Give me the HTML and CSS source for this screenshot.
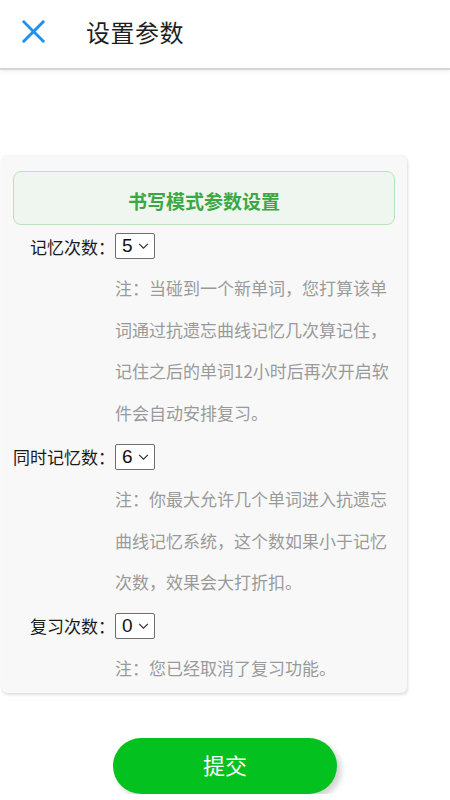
FILE: index.html
```html
<!DOCTYPE html>
<html lang="zh-CN">
<head>
<meta charset="utf-8">
<title>设置参数</title>
<link rel="stylesheet" href="styles.css">
</head>
<body>
<header class="topbar">
  <svg class="close" viewBox="0 0 24 24" width="24" height="24" aria-hidden="true">
    <path d="M2 2 L22 22 M22 2 L2 22" stroke="#1f8ff0" stroke-width="3" fill="none" stroke-linecap="square"/>
  </svg>
  <h1 class="title">设置参数</h1>
</header>

<main class="card">
  <div class="card-head">书写模式参数设置</div>

  <div class="row">
    <span class="label">记忆次数：</span>
    <span class="select"><span class="val">5</span><svg viewBox="0 0 12 8" width="11" height="7"><path d="M1 1 L6 6 L11 1" stroke="#333" stroke-width="1.4" fill="none"/></svg></span>
  </div>
  <p class="note">注：当碰到一个新单词，您打算该单词通过抗遗忘曲线记忆几次算记住，记住之后的单词12小时后再次开启软件会自动安排复习。</p>

  <div class="row">
    <span class="label">同时记忆数：</span>
    <span class="select"><span class="val">6</span><svg viewBox="0 0 12 8" width="11" height="7"><path d="M1 1 L6 6 L11 1" stroke="#333" stroke-width="1.4" fill="none"/></svg></span>
  </div>
  <p class="note">注：你最大允许几个单词进入抗遗忘曲线记忆系统，这个数如果小于记忆次数，效果会大打折扣。</p>

  <div class="row">
    <span class="label">复习次数：</span>
    <span class="select"><span class="val">0</span><svg viewBox="0 0 12 8" width="11" height="7"><path d="M1 1 L6 6 L11 1" stroke="#333" stroke-width="1.4" fill="none"/></svg></span>
  </div>
  <p class="note">注：您已经取消了复习功能。</p>
</main>

<div class="actions">
  <button class="submit">提交</button>
</div>
</body>
</html>
```

FILE: styles.css
```css
* { box-sizing: border-box; }
html, body { margin: 0; padding: 0; background: #ffffff; }
body {
  font-family: "Noto Sans CJK SC", "Noto Sans", sans-serif;
  color: #222;
  width: 450px;
}
.topbar {
  height: 70px;
  display: flex;
  align-items: center;
  padding-left: 22px;
  padding-bottom: 6px;
  background: #fff;
  border-bottom: 2px solid #d6d6d6;
  box-shadow: 0 2px 4px rgba(0,0,0,0.06);
}
.close { width: 23px; height: 23px; display: block; }
.title {
  margin: 0 0 0 41px;
  font-size: 24px;
  font-weight: 400;
  color: #1e1e1e;
  letter-spacing: 0.5px;
}
.card {
  margin: 85px 0 0 1px;
  width: 406px;
  background: #f8f8f8;
  border-radius: 6px;
  box-shadow: 1px 2px 3px rgba(0,0,0,0.12), 0 0 1px rgba(0,0,0,0.08);
  padding: 16px 12px 4px 12px;
}
.card-head {
  height: 54px;
  border: 1.5px solid #b9e2bb;
  background: #eef6ef;
  border-radius: 8px;
  display: flex;
  align-items: center;
  justify-content: center;
  padding-top: 4px;
  color: #3aa844;
  font-weight: 700;
  font-size: 19px;
}
.row {
  display: flex;
  align-items: center;
  margin-top: 8px;
  height: 26px;
}
.row + .note { margin-top: 8px; }
.note + .row { margin-top: 10px; }
.label {
  width: 102px;
  text-align: right;
  font-size: 17px;
  color: #1a1a1a;
  white-space: nowrap;
}
.select {
  width: 40px;
  height: 26px;
  border: 1px solid #6f6f6f;
  border-radius: 2px;
  background: #fff;
  display: flex;
  align-items: center;
  justify-content: space-between;
  padding: 0 5px 0 6px;
  font-family: "Liberation Sans", Arial, sans-serif;
  font-size: 19px;
  color: #111;
}
.select svg { display: block; margin-top: 1px; }
.note {
  margin: 0 0 0 102px;
  width: 280px;
  font-size: 17px;
  line-height: 41.7px;
  color: #9a9a9a;
}
.actions {
  margin-top: 45px;
  padding-left: 113px;
}
.submit {
  width: 224px;
  height: 56px;
  border: none;
  border-radius: 28px;
  background: #03c21f;
  color: #fff;
  font-family: "Noto Sans CJK SC", sans-serif;
  font-size: 22px;
  box-shadow: 4px 4px 6px rgba(0,0,0,0.18);
  padding: 0 0 4px 0;
}
```
